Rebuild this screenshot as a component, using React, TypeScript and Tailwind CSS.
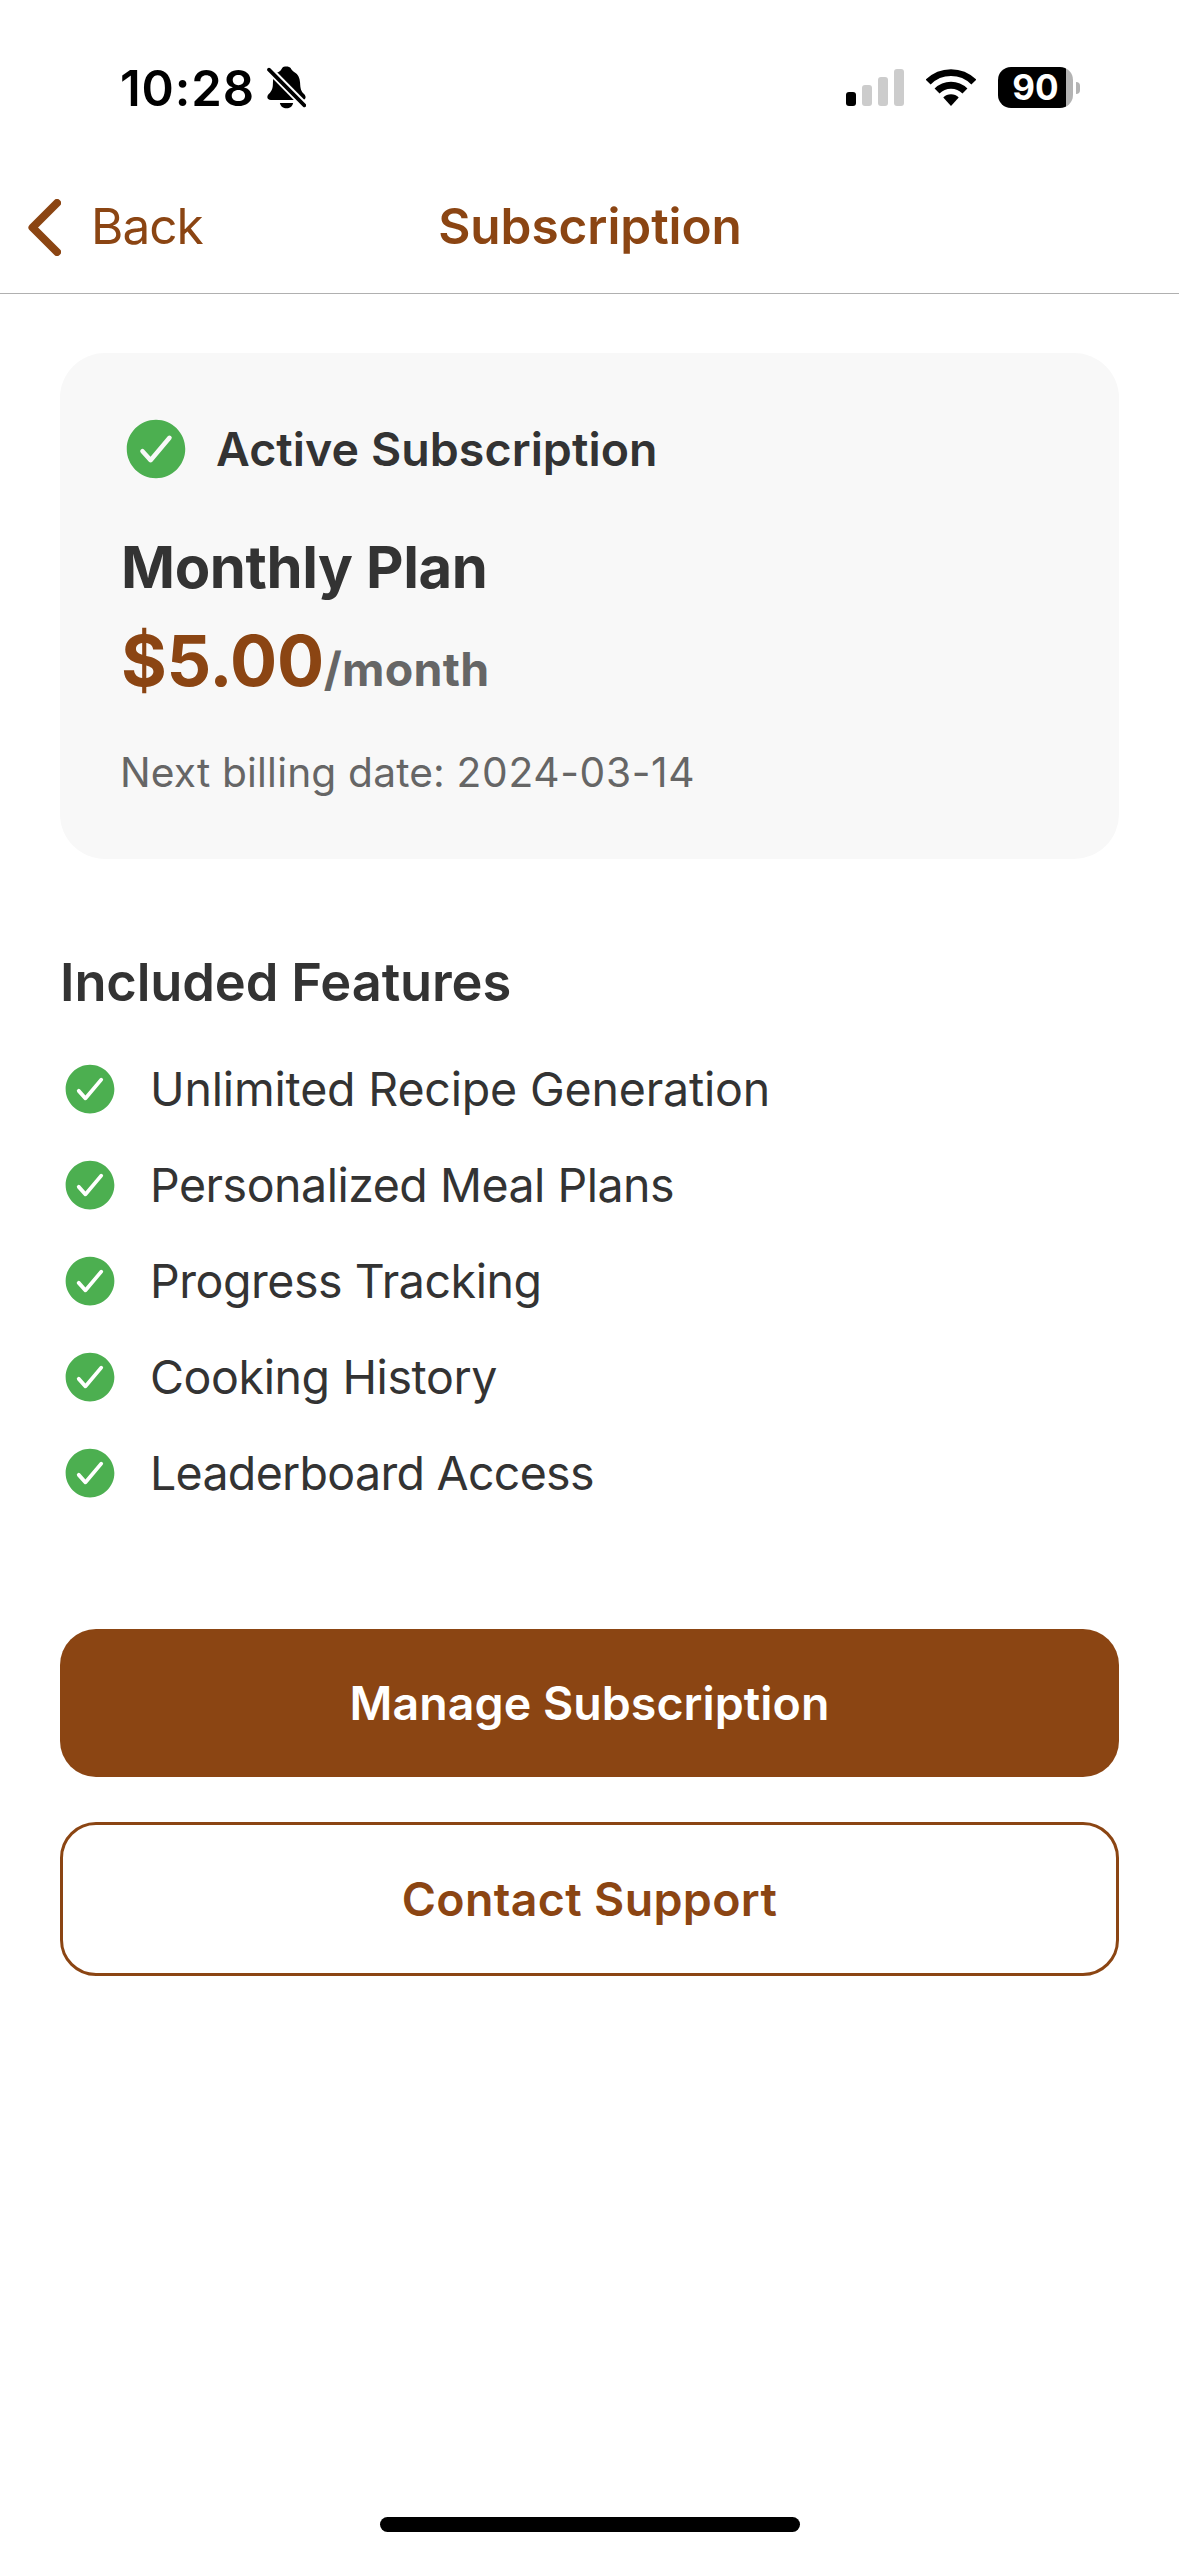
import clsx from "clsx";

const features = [
  { id: "recipes", label: "Unlimited Recipe Generation", tracking: "tracking-[-0.17px]" },
  { id: "meals", label: "Personalized Meal Plans", tracking: "tracking-[-0.49px]" },
  { id: "progress", label: "Progress Tracking", tracking: "tracking-[-0.45px]" },
  { id: "history", label: "Cooking History", tracking: "tracking-[-0.4px]" },
  { id: "leaderboard", label: "Leaderboard Access", tracking: "tracking-[-0.7px]" },
];

const signalBars = [
  { height: "h-[14px]", color: "bg-black" },
  { height: "h-[21px]", color: "bg-[#cccccc]" },
  { height: "h-[29px]", color: "bg-[#cccccc]" },
  { height: "h-[37px]", color: "bg-[#cccccc]" },
];

function CheckmarkCircle({ className }: { className?: string }) {
  return (
    <svg viewBox="0 0 512 512" className={clsx("shrink-0 fill-[#4CAF50]", className)} aria-hidden="true">
      <path d="M256 48C141.31 48 48 141.31 48 256s93.31 208 208 208 208-93.31 208-208S370.69 48 256 48zm108.25 138.29l-134.4 160a16 16 0 01-12 5.71h-.27a16 16 0 01-11.89-5.3l-57.6-64a16 16 0 1123.78-21.4l45.29 50.32 122.59-145.91a16 16 0 0124.5 20.58z" />
    </svg>
  );
}

function BellOff() {
  return (
    <svg viewBox="0 0 118 130" className="ml-3 h-[43px] w-[39px]" aria-hidden="true">
      <path d="M35 18C40 16 43 12 46 6C50 0 68 0 72 7C74 11 76 14 82 18C95 26 99 36 100 50C101 70 103 76 112 85C120 93 118 103 106 103H12C0 103 -2 92 5 85C16 74 18 66 18 48C19 32 24 22 35 18Z" />
      <path d="M39 112H79C77 122 69 128 59 128C49 128 41 122 39 112Z" />
      <path d="M-4 0L122 128" stroke="white" strokeWidth="23" />
      <path d="M6 11L113 119" stroke="black" strokeWidth="11" strokeLinecap="round" />
    </svg>
  );
}

function Wifi() {
  return (
    <svg viewBox="0 0 151 111" className="h-[37px] w-[50px]" fill="none" aria-hidden="true">
      <path d="M6.6 39.1A97.5 97.5 0 0 1 144.4 39.1" stroke="black" strokeWidth="21" />
      <path d="M33.4 65.9A59.5 59.5 0 0 1 117.6 65.9" stroke="black" strokeWidth="21" />
      <path d="M52.2 85.7A33 33 0 0 1 98.8 85.7L75.5 111Z" fill="black" />
    </svg>
  );
}

function StatusBar() {
  return (
    <div className="flex h-[175px] items-center justify-between pr-[99px] pl-[120px]">
      <div className="flex items-center">
        <span className="pt-0.5 text-[49px] leading-none font-semibold tracking-[0.9px] text-black">10:28</span>
        <BellOff />
      </div>

      <div className="flex items-center gap-[22px]">
        <div className="flex items-end gap-1.5">
          {signalBars.map((bar) => (
            <div key={bar.height} className={clsx("w-[10px] rounded-[3px]", bar.height, bar.color)} />
          ))}
        </div>
        <Wifi />
        <div className="flex items-center gap-[3px]">
          <div className="flex h-[41px] w-[75px] items-center justify-center rounded-[13px] bg-[linear-gradient(to_right,black_68px,#b3b3b3_68px)]">
            <span className="text-[35px] leading-none font-bold text-white">90</span>
          </div>
          <div className="h-3 w-1 rounded-r-full bg-[#b3b3b3]" />
        </div>
      </div>
    </div>
  );
}

function Header() {
  return (
    <header className="grid h-[119px] grid-cols-[1fr_auto_1fr] items-center border-b border-[#b0b0b0] pb-[14px] text-[49.5px] leading-none text-[#8B4513]">
      <button className="flex items-center gap-[30px] pl-7">
        <svg viewBox="0 0 33 57" className="h-[57px] w-[33px]" fill="none" aria-hidden="true">
          <path d="M29 4L4.5 28.5L29 53" stroke="currentColor" strokeWidth="8" strokeLinecap="round" strokeLinejoin="round" />
        </svg>
        <span className="tracking-[-1px]">Back</span>
      </button>
      <h1 className="pl-px font-semibold tracking-[-0.05px]">Subscription</h1>
    </header>
  );
}

function PlanCard() {
  return (
    <section className="rounded-[45px] bg-[#f8f8f8] p-[60px]">
      <div className="flex items-center gap-6">
        <CheckmarkCircle className="size-[72px]" />
        <span className="text-[46.5px] leading-none font-semibold tracking-[0.07px]">Active Subscription</span>
      </div>
      <h2 className="mt-[46px] pl-px text-[58px] leading-[72px] font-bold tracking-[-0.4px]">Monthly Plan</h2>
      <p className="mt-4 flex items-baseline pl-px font-bold">
        <span className="text-[70px] leading-[84px] tracking-[-0.4px] text-[#8B4513]">$5.00</span>
        <span className="text-[46.5px] leading-none tracking-[0.3px] text-[#666666]">/month</span>
      </p>
      <p className="mt-11 text-[40.7px] leading-[52px] tracking-[0.16px] text-[#666666]">
        Next billing date: <span className="tracking-[0.66px]">2024-03-14</span>
      </p>
    </section>
  );
}

export default function App() {
  return (
    <div className="flex h-[2556px] w-[1179px] flex-col bg-white font-['Inter',sans-serif] text-[#333333]">
      <StatusBar />
      <Header />

      <main className="px-[60px] pt-[59px]">
        <PlanCard />

        <section className="mt-[91px]">
          <h2 className="text-[52.4px] leading-[64px] font-semibold tracking-[-0.12px]">Included Features</h2>
          <ul className="mt-[45px] flex flex-col gap-9">
            {features.map((feature) => (
              <li key={feature.id} className="flex items-center gap-[30px]">
                <CheckmarkCircle className="size-[60px]" />
                <span className={clsx("text-[46.5px] leading-none", feature.tracking)}>{feature.label}</span>
              </li>
            ))}
          </ul>
        </section>

        <div className="mt-[126px] flex flex-col gap-[45px] text-[46.5px] leading-none font-semibold">
          <button className="h-[148px] rounded-[36px] bg-[#8B4513] tracking-[0.05px] text-white">
            Manage Subscription
          </button>
          <button className="h-[154px] rounded-[36px] border-[3px] border-[#8B4513] tracking-[0.34px] text-[#8B4513]">
            Contact Support
          </button>
        </div>
      </main>

      {/* Home indicator */}
      <div className="mt-auto flex justify-center pb-6 pl-px">
        <div className="h-[15px] w-[420px] rounded-full bg-black" />
      </div>
    </div>
  );
}
